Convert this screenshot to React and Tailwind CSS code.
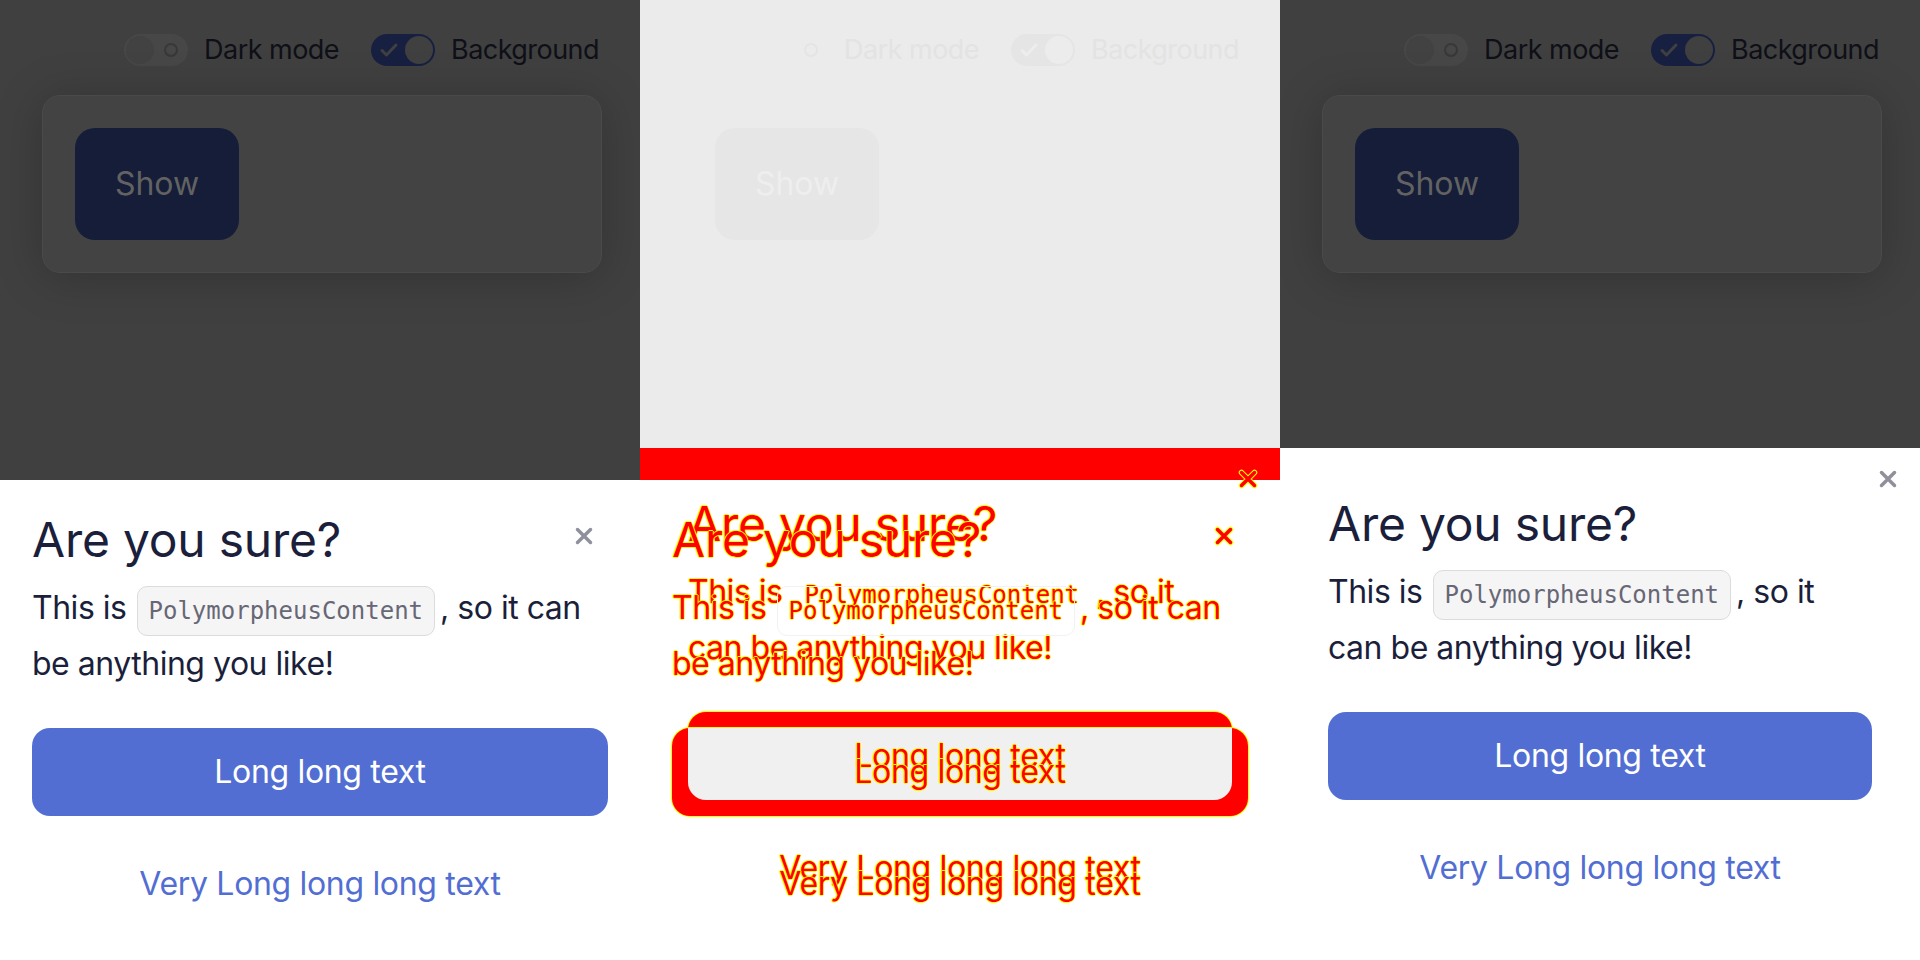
import React from "react";

const diffText =
  "text-[#ff0000] [text-shadow:1px_0_#ffff00,-1px_0_#ffff00,0_1px_#ffff00,0_-1px_#ffff00]";

const CloseIcon = ({ diff }) => (
  <svg width="20" height="20" viewBox="0 0 20 20" fill="none">
    {diff && (
      <g stroke="#ffff00" strokeWidth="5.5" strokeLinecap="round">
        <path d="M3.5 3.5l13 13M16.5 3.5l-13 13" />
      </g>
    )}
    <g stroke={diff ? "#ff0000" : "#8f909b"} strokeWidth="3.5" strokeLinecap="round">
      <path d="M3.5 3.5l13 13M16.5 3.5l-13 13" />
    </g>
  </svg>
);

const Toggle = ({ on, faint }) => {
  if (on) {
    return (
      <div
        className={`w-[64px] h-[32px] rounded-full flex items-center justify-between pl-[8px] pr-[2px] ${
          faint ? "bg-[#e5e5e5]" : "bg-[#172040]"
        }`}
      >
        <svg width="20" height="16" viewBox="0 0 20 16" fill="none">
          <path
            d="M3 8.5l4.5 4.5L17 3"
            stroke={faint ? "#ededed" : "#404040"}
            strokeWidth="3"
            strokeLinecap="round"
            strokeLinejoin="round"
          />
        </svg>
        <div className={`w-[28px] h-[28px] rounded-full ${faint ? "bg-[#ececec]" : "bg-[#404040]"}`} />
      </div>
    );
  }
  return (
    <div
      className={`w-[64px] h-[32px] rounded-full flex items-center justify-between pl-[2px] pr-[10px] ${
        faint ? "bg-[#ebebeb]" : "bg-[#474747]"
      }`}
    >
      <div className={`w-[28px] h-[28px] rounded-full ${faint ? "bg-[#ebebeb]" : "bg-[#424242]"}`} />
      <div
        className={`w-[14px] h-[14px] rounded-full border-2 ${faint ? "border-[#e4e4e4]" : "border-[#383838]"}`}
      />
    </div>
  );
};

const PageBehind = ({ faint }) => {
  const label = `text-[27px] leading-[32px] tracking-[-0.02em] ${faint ? "text-[#e3e3e3]" : "text-[#0f1017]"}`;
  return (
    <div className="flex flex-col">
      <div className="h-[32px] mt-[34px] pr-[41px] flex items-center justify-end gap-[32px]">
        <div className="flex items-center gap-[16px]">
          <Toggle faint={faint} />
          <span className={label}>Dark mode</span>
        </div>
        <div className="flex items-center gap-[16px]">
          <Toggle on faint={faint} />
          <span className={label}>Background</span>
        </div>
      </div>
      <div
        className={`ml-[42px] w-[560px] mt-[29px] rounded-[18px] p-[32px] border ${
          faint
            ? "border-[#ebebeb] bg-[#ebebeb]"
            : "border-[#4a4a4a] bg-[#434343] shadow-[0_4px_48px_rgba(0,0,0,0.22)]"
        }`}
      >
        <div
          className={`w-[164px] h-[112px] rounded-[20px] flex items-center justify-center text-[32px] ${
            faint ? "bg-[#e6e6e6] text-[#eeeeee]" : "bg-[#161d38] text-[#626262]"
          }`}
        >
          Show
        </div>
      </div>
    </div>
  );
};

const Chip = ({ diff, ghost }) => (
  <span
    className={`inline-block align-baseline ml-[10px] mr-[5px] h-[50px] px-[11px] py-[7px] rounded-[10px] border font-['DejaVu_Sans_Mono',monospace] text-[24px] leading-[34px] tracking-normal ${
      diff
        ? `${ghost ? "border-[#f2f2f2]" : "border-transparent"} bg-transparent ${diffText}`
        : "border-[#dcdcdc] bg-[#f5f5f5] text-[#676776]"
    }`}
  >
    PolymorpheusContent
  </span>
);

const Sheet = ({ variant, diff }) => {
  const expected = variant === "expected";
  const ink = diff ? diffText : "text-[#1b1f3b]";
  const line1End = expected ? ", so it" : ", so it can";
  const line2 = expected ? "can be anything you like!" : "be anything you like!";
  return (
    <div className={`relative ${expected ? "p-[48px]" : "p-[32px]"} ${diff ? "" : "bg-white"}`}>
      {expected && (
        <div className="absolute top-[21px] right-[22px] w-[20px] h-[20px]">
          <CloseIcon diff={diff} />
        </div>
      )}
      <div className="h-[56px] flex items-start justify-between">
        <h2 className={`text-[48px] leading-[56px] font-normal tracking-[-0.005em] ${ink}`}>Are you sure?</h2>
        {!expected && (
          <div className="w-[48px] h-[48px] flex items-center justify-center">
            <CloseIcon diff={diff} />
          </div>
        )}
      </div>
      <div className={`mt-[12px] text-[32px] leading-[56px] tracking-[-0.015em] ${ink}`}>
        <div className="whitespace-nowrap h-[56px]">
          This is
          <Chip diff={diff} ghost={!expected} />
          {line1End}
        </div>
        <div className="whitespace-nowrap h-[56px]">{line2}</div>
      </div>
      <div
        className={`mt-[36px] h-[88px] rounded-[18px] flex items-center justify-center text-[32px] tracking-[-0.01em] ${
          diff ? "bg-[#ff0000] [box-shadow:0_0_0_1px_#ffff00]" : "bg-[#526ed3] text-white"
        }`}
      >
        {!diff && "Long long text"}
      </div>
      <div
        className={`mt-[24px] h-[88px] flex items-center justify-center text-[32px] tracking-[-0.01em] ${
          diff ? diffText : "text-[#526ed3]"
        }`}
      >
        Very Long long long text
      </div>
    </div>
  );
};

const Panel = ({ variant }) => (
  <div className="w-[640px] h-[960px] flex flex-col bg-[#404040] overflow-hidden">
    <PageBehind />
    <div className="mt-auto">
      <Sheet variant={variant} />
    </div>
  </div>
);

const DiffPanel = () => (
  <div className="w-[640px] h-[960px] flex flex-col bg-white overflow-hidden">
    <div className="h-[448px] bg-[#ebebeb]">
      <PageBehind faint />
    </div>
    <div className="grid flex-1">
      <div className="[grid-area:1/1] flex flex-col">
        <div className="h-[32px] bg-[#ff0000]" />
      </div>
      <div className="[grid-area:1/1]">
        <Sheet variant="expected" diff />
      </div>
      <div className="[grid-area:1/1] pt-[32px]">
        <Sheet variant="actual" diff />
      </div>
      <div className="[grid-area:1/1] relative pt-[280px] px-[48px]">
        <div className="h-[72px] rounded-b-[18px] bg-[#f0f0f0] grid">
          <div
            className={`[grid-area:1/1] -mt-[16px] h-[88px] flex items-center justify-center text-[32px] tracking-[-0.01em] ${diffText}`}
          >
            Long long text
          </div>
          <div
            className={`[grid-area:1/1] h-[88px] flex items-center justify-center text-[32px] tracking-[-0.01em] ${diffText}`}
          >
            Long long text
          </div>
        </div>
      </div>
    </div>
  </div>
);

export default function App() {
  return (
    <div className="w-[1920px] h-[960px] flex font-['Inter',sans-serif] overflow-hidden">
      <Panel variant="actual" />
      <DiffPanel />
      <Panel variant="expected" />
    </div>
  );
}
